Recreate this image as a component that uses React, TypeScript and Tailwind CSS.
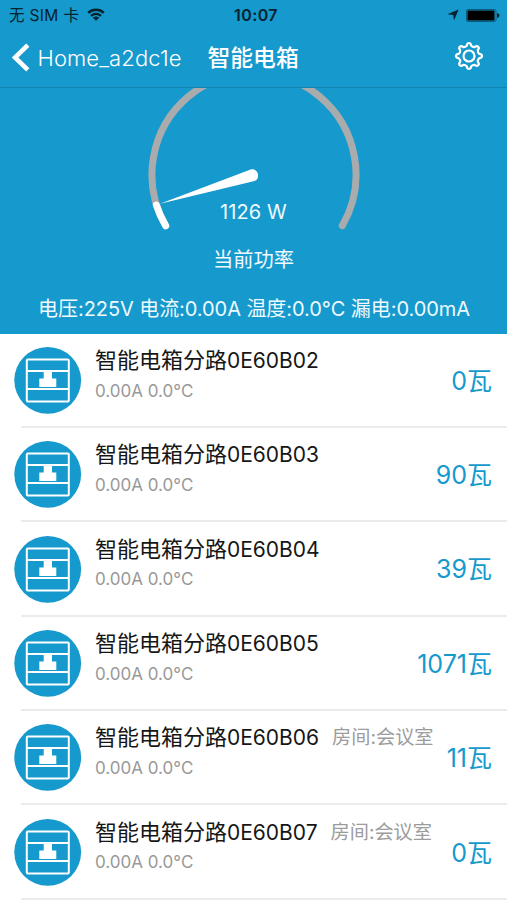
type Circuit = { name: string; watts: string; room?: string };

const circuits: Circuit[] = [
  { name: "0E60B02", watts: "0" },
  { name: "0E60B03", watts: "90" },
  { name: "0E60B04", watts: "39" },
  { name: "0E60B05", watts: "1071" },
  { name: "0E60B06", watts: "11", room: "房间:会议室" },
  { name: "0E60B07", watts: "0", room: "房间:会议室" },
];

function StatusBar() {
  return (
    <div className="flex h-[30px] items-center justify-between pl-[9px] pr-[7px] text-[15.5px] leading-none text-[#06222f]">
      <div className="flex w-[160px] items-center">
        <span className="mt-px whitespace-pre tracking-[0.35px]">无 SIM 卡</span>
        <svg className="ml-[8px] h-[14px] w-[18px]" viewBox="0 0 18 14" fill="none" stroke="currentColor">
          <path d="M1.2 4.8C5.4.8 12.6.8 16.800 4.800" strokeWidth="2.500" />
          <path d="M4 7.900C6.800 5.300 11.200 5.300 14 7.900" strokeWidth="2.300" />
          <path d="M9 12.800L5.900 9.800C7.700 8.200 10.300 8.200 12.100 9.800Z" fill="currentColor" stroke="none" />
        </svg>
      </div>
      <span className="ml-[3px] text-[16px] font-semibold tracking-[0.4px]">10:07</span>
      <div className="flex w-[160px] items-center justify-end">
        <svg className="mr-[7px] h-[12px] w-[12px]" viewBox="0 0 12 12">
          <path d="M11.600.4L7 11.600L6.300 5.900L.4 5.200Z" fill="#06222f" />
        </svg>
        <svg className="h-[13px] w-[34px]" viewBox="0 0 34 13">
          <rect x=".5" y=".5" width="29.500" height="12" rx="1.500" fill="none" stroke="#0b5c7c" />
          <rect x="1.500" y="1.500" width="27" height="10" rx=".5" fill="#000" />
          <path d="M31 4.300Q33.500 4.300 33.500 6.500T31 8.700Z" fill="#06222f" />
        </svg>
      </div>
    </div>
  );
}

function NavBar() {
  return (
    <div className="flex h-[56px] items-center text-white">
      <svg className="ml-[12px] h-[30px] w-[18px]" viewBox="0 0 18 30" fill="none" stroke="white" strokeWidth="4.600">
        <path d="M15.800 2.200L3 14.500L15.800 26.800" />
      </svg>
      <span className="ml-[7.500px] w-[170px] text-[22px] font-light leading-none tracking-[0.1px]">Home_a2dc1e</span>
      <span className="text-[22.8px] font-medium leading-none">智能电箱</span>
      <svg className="-mt-[4px] ml-auto mr-[23px] h-[30px] w-[30px]" viewBox="-15 -15 30 30" fill="none" stroke="white" strokeWidth="2.200">
        <circle r="5.500" />
        <path
          strokeLinejoin="round"
          d="M-2.200 -10.200Q-2 -13 0 -13T2.200 -10.200Q3.700 -8.600 5.700 -8.800Q7.800 -10.600 9.200 -9.200T8.800 -5.700Q8.600 -3.700 10.200 -2.200Q13 -2 13 0T10.200 2.200Q8.600 3.700 8.800 5.700Q10.600 7.800 9.200 9.200T5.700 8.800Q3.700 8.600 2.200 10.200Q2 13 0 13T-2.200 10.200Q-3.700 8.600 -5.700 8.800Q-7.800 10.600 -9.200 9.200T-8.800 5.700Q-8.600 3.700 -10.200 2.200Q-13 2 -13 0T-10.200 -2.200Q-8.600 -3.700 -8.800 -5.700Q-10.600 -7.800 -9.200 -9.200T-5.700 -8.800Q-3.700 -8.600 -2.200 -10.200Z"
        />
      </svg>
    </div>
  );
}

function Gauge() {
  return (
    <svg className="block h-[144px] w-[507px] shrink-0" viewBox="0 88 507 144" fill="none" strokeLinecap="round" strokeWidth="7">
      <path d="M165.700 225.700A102 102 0 1 1 342.300 225.700" stroke="#a9abad" />
      <path d="M156.300 205Q159.700 215.600 165.700 225.700" stroke="white" />
      <path d="M160 203.800L251.300 169.300A5.800 5.800 0 0 1 258 174.500L257.800 178Q257 180.600 253.500 181.300Z" fill="white" stroke="none" />
    </svg>
  );
}

function CircuitIcon() {
  return (
    <svg className="mt-[12.500px] h-[68px] w-[68px] shrink-0" viewBox="0 0 68 68" fill="none">
      <circle cx="33.700" cy="34.300" r="33.400" fill="#1699cc" />
      <g stroke="white" strokeWidth="2">
        <rect x="12.800" y="13.500" width="42" height="42" rx="1" />
        <path d="M12.800 25H54.800M12.800 43H54.800" />
      </g>
      <path d="M29.700 25H38V32.400H42.300V41H25.300V32.400H29.700Z" fill="white" />
    </svg>
  );
}

function CircuitRow({ name, watts, room }: Circuit) {
  return (
    <div className="flex h-[94.35px] shrink-0 flex-col">
      <div className="flex min-h-0 flex-1 pl-[14px] pr-[15px]">
        <CircuitIcon />
        <div className="ml-[12.900px] flex flex-col whitespace-nowrap">
          <div className="mt-[13.500px] flex h-[26px] items-center leading-none">
            <span className="text-[22px] text-[#161616]">
              智能电箱分路<span className="text-[21px]">{name}</span>
            </span>
            {room && <span className="ml-[13px] mt-px text-[19.2px] text-[#9c9c9c]">{room}</span>}
          </div>
          <span className="mt-[7.500px] text-[17px] leading-[20px] tracking-[0.03px] text-[#999]">0.00A 0.0°C</span>
        </div>
        <span className="ml-auto mt-[33.300px] whitespace-nowrap text-[25px] leading-[28px] text-[#1699cc]">{watts}瓦</span>
      </div>
      <div className="ml-[21px] h-[2px] bg-[#ebebed]" />
    </div>
  );
}

export default function App() {
  return (
    <div className="flex h-[900px] w-[507px] flex-col overflow-hidden bg-white font-['Inter','Noto_Sans_CJK_SC',sans-serif]">
      <header className="h-[88px] shrink-0 border-b border-[#1283b1] bg-[#1699cc]">
        <StatusBar />
        <NavBar />
      </header>
      <section className="flex h-[245.5px] shrink-0 flex-col items-center bg-[#1699cc] text-[#effaff]">
        <Gauge />
        <span className="-mt-[32px] text-[20px] leading-[24px] tracking-[0.1px]">1126 W</span>
        <span className="mt-[24px] text-[20.3px] leading-[24px]">当前功率</span>
        <span className="mt-[25px] whitespace-pre pl-px text-[20px] leading-[24px] tracking-[-0.07px]">电压:225V 电流:0.00A 温度:0.0°C 漏电:0.00mA</span>
      </section>
      <main className="flex flex-col">
        {circuits.map((circuit) => (
          <CircuitRow key={circuit.name} {...circuit} />
        ))}
      </main>
    </div>
  );
}
